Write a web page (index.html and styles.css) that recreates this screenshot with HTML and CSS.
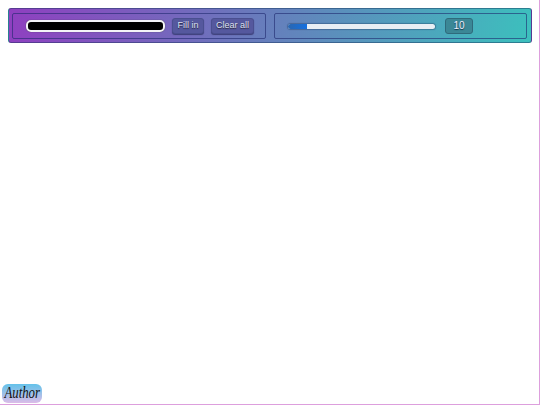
FILE: index.html
```html
<!DOCTYPE html>
<html lang="en">

<head>
    <meta charset="UTF-8">
    <meta name="viewport" content="width=device-width, initial-scale=1.0">
    <title>Fill in</title>

    <link rel="stylesheet" href="styles.css">
</head>

<body>
    <div class="page">
        <div class="toolbar">
            <section class="panel panel-left">
                <input class="color" type="text">
                <button class="btn btn-fill">Fill in</button>
                <button class="btn btn-clear">Clear all</button>
            </section>
            <section class="panel panel-right">
                <div class="slider">
                    <div class="slider-fill"></div>
                </div>
                <div class="size">10</div>
            </section>
        </div>
        <div class="author"><span>Author</span></div>
    </div>
</body>

</html>
```

FILE: styles.css
```css
html,
body {
    margin: 0;
    padding: 0;
    background: #fff;
}

.page {
    position: relative;
    box-sizing: border-box;
    width: 540px;
    height: 405px;
    padding: 8px 7px 0 8px;
    border-right: 1px solid #dd9fdd;
    border-bottom: 1px solid #dd9fdd;
    font-family: "Liberation Sans", Arial, sans-serif;
}

.toolbar {
    box-sizing: border-box;
    display: flex;
    gap: 8px;
    height: 35px;
    padding: 4px 4px 3px 3px;
    border: 1px solid rgba(20, 50, 90, 0.45);
    border-radius: 3px;
    background: linear-gradient(100deg, #8f3fc0 0%, #6a78bc 45%, #3cc0bd 100%);
}

.panel {
    box-sizing: border-box;
    display: flex;
    align-items: center;
    height: 26px;
    border: 1px solid rgba(30, 40, 110, 0.6);
    border-radius: 2px;
}

.panel-left {
    width: 254px;
    padding-left: 13px;
}

.panel-right {
    flex: 1;
    padding-left: 13px;
}

.color {
    box-sizing: border-box;
    width: 139px;
    height: 12px;
    padding: 0;
    border: 2px solid #f4f4f8;
    border-radius: 5px;
    background: #000;
    box-shadow: 0 0 1px #333;
}

.btn {
    box-sizing: border-box;
    height: 16px;
    margin-left: 7px;
    padding: 0 0 2px;
    border: 1px solid #4a4f90;
    border-radius: 3px;
    background: #55589e;
    color: #dfe0f0;
    font-family: inherit;
    font-size: 9px;
    text-shadow: 0 1px 1px #223;
    box-shadow: 0 1px 1px #3d3f78;
}

.btn-fill {
    width: 32px;
}

.btn-clear {
    width: 43px;
}

.slider {
    box-sizing: border-box;
    width: 147px;
    height: 5px;
    border-radius: 3px;
    background: #e8eef4;
    box-shadow: 0 0 1px 1px rgba(30, 60, 100, 0.4);
}

.slider-fill {
    width: 19px;
    height: 5px;
    border-radius: 3px 0 0 3px;
    background: linear-gradient(90deg, #2a66b0, #1570e0);
}

.size {
    box-sizing: border-box;
    width: 28px;
    height: 16px;
    margin-left: 10px;
    border: 1px solid #2f6a7c;
    border-radius: 3px;
    background: #3b8796;
    color: #eef;
    font-size: 10px;
    line-height: 13px;
    text-align: center;
    text-shadow: 0 1px 1px #134;
}

.author {
    position: absolute;
    left: 2px;
    top: 384px;
    box-sizing: border-box;
    width: 40px;
    height: 19px;
    border-radius: 6px;
    background: linear-gradient(180deg, #64c2ea 0%, #9cc0e8 50%, #dcbce8 100%);
    color: #111;
    font-family: "Liberation Serif", serif;
    font-style: italic;
    font-size: 16px;
    line-height: 17px;
    text-align: center;
}

.author span {
    display: inline-block;
    transform: scaleX(0.8);
    transform-origin: center;
    margin: 0 -6px;
}
```
